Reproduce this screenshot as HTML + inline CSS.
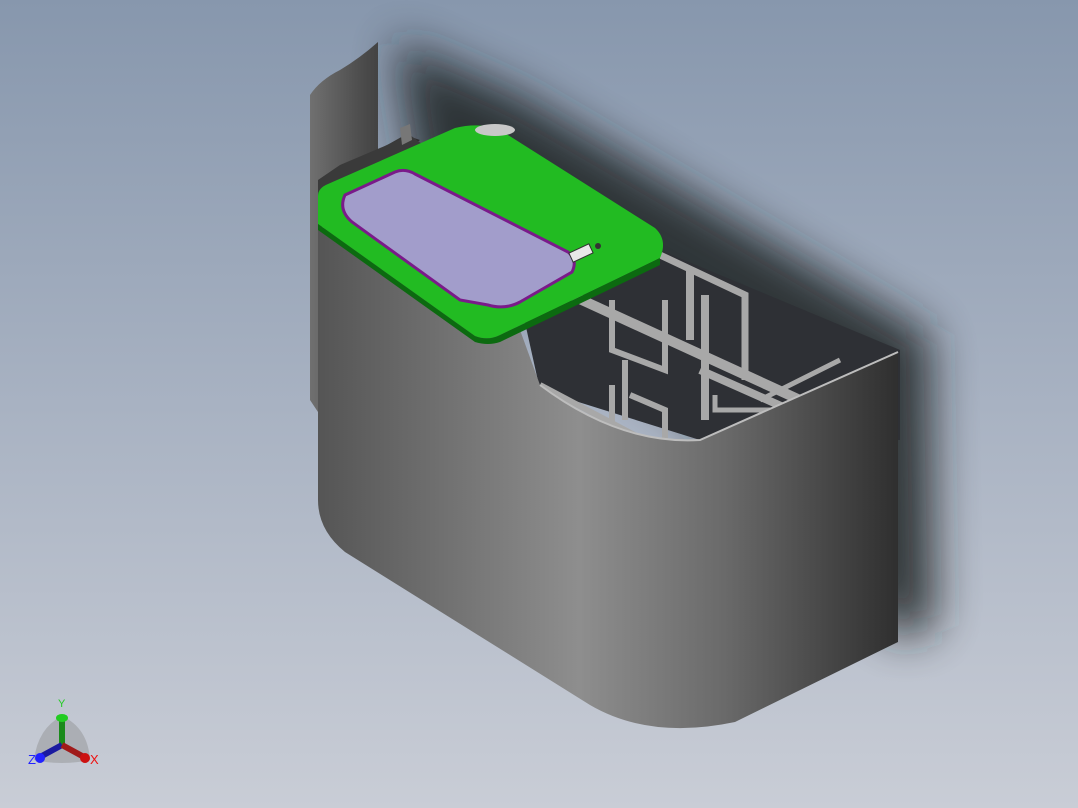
<!DOCTYPE html>
<html><head><style>html,body{margin:0;padding:0;width:1078px;height:808px;overflow:hidden}</style></head><body>
<svg width="1078" height="808" viewBox="0 0 1078 808" xmlns="http://www.w3.org/2000/svg">
<defs>
<linearGradient id="bg" x1="0" y1="0" x2="0" y2="1"><stop offset="0" stop-color="#8797ad"/><stop offset="0.5" stop-color="#a8b2c2"/><stop offset="1" stop-color="#c9cdd6"/></linearGradient>
<linearGradient id="body" x1="0" y1="0" x2="1" y2="0"><stop offset="0" stop-color="#555"/><stop offset="0.45" stop-color="#8e8e8e"/><stop offset="0.7" stop-color="#6a6a6a"/><stop offset="1" stop-color="#2f2f2f"/></linearGradient>
<linearGradient id="lp" x1="0" y1="0" x2="1" y2="0"><stop offset="0" stop-color="#707070"/><stop offset="0.5" stop-color="#4a4a4a"/><stop offset="1" stop-color="#2c2c2c"/></linearGradient>
<filter id="bl"><feGaussianBlur stdDeviation="22"/></filter>
</defs>
<rect width="1078" height="808" fill="url(#bg)"/>
<path d="M395,40 L520,95 L700,200 L930,335 L935,625 L900,640 L700,420 L420,200 Z" fill="#1e2024" opacity="0.85" filter="url(#bl)"/>
<!-- left back panel -->
<path d="M310,95 Q320,80 340,70 Q360,58 378,42 L378,150 L405,135 L420,140 L318,215 L318,412 L310,400 Z" fill="url(#lp)"/>
<path d="M318,230 L318,180 L340,165 L380,148 L410,135 L430,150 Z" fill="#3a3a3a"/>
<!-- interior -->
<path d="M520,300 L660,250 L900,350 L900,440 L700,440 L540,390 Z" fill="#2e3035"/>
<g stroke="#a8a8a8" fill="none">
<path d="M560,290 L800,400" stroke-width="10"/>
<path d="M700,370 L790,410" stroke-width="8"/>
<path d="M660,255 L745,295 L745,380" stroke-width="7"/>
<path d="M690,270 L690,340 M705,295 L705,420" stroke-width="8"/>
<path d="M612,300 L612,350 L665,370 L665,300" stroke-width="6"/>
<path d="M625,360 L625,420 M612,385 L612,425" stroke-width="6"/>
<path d="M630,395 L665,410 L665,438" stroke-width="6"/>
<path d="M715,395 L715,410 L780,410 M760,400 L840,360" stroke-width="5"/>
<path d="M540,385 L640,438" stroke-width="6"/>
</g>
<!-- front body -->
<path d="M318,225 L520,330 L540,385 Q620,445 700,440 L898,352 L898,642 L735,722 Q650,740 590,705 L345,552 Q318,530 318,500 Z" fill="url(#body)"/>
<path d="M540,385 Q620,445 700,440 L898,352" stroke="#bdbdbd" stroke-width="2" fill="none"/>
<!-- green lid -->
<path d="M318,196 Q318,188 328,184 L455,128 Q480,122 500,130 L655,228 Q668,240 660,258 L600,287 L500,335 Q488,341 475,336 L318,224 Z" fill="#22bb22"/>
<path d="M318,224 L475,336 Q488,341 500,335 L600,287 L660,258 L660,265 L600,294 L500,342 Q488,346 475,342 L318,230 Z" fill="#0c6a10"/>
<path d="M345,195 L395,172 Q405,168 415,174 L568,252 Q578,260 572,272 L520,302 Q505,310 488,305 L460,300 L352,222 Q338,210 345,195 Z" fill="#a29dcb" stroke="#7a1a8a" stroke-width="3"/>
<rect x="570" y="248" width="22" height="10" fill="#e8e8e8" stroke="#333" transform="rotate(-25 581 253)"/>
<circle cx="598" cy="246" r="3" fill="#333"/>
<path d="M400,128 L410,124 L412,140 L402,145 Z" fill="#777"/>
<ellipse cx="495" cy="130" rx="20" ry="6" fill="#c8c8c8"/>
<!-- triad -->
<path d="M62,716 Q88,728 90,760 Q62,766 34,760 Q38,728 62,716 Z" fill="#888" opacity="0.4"/>
<line x1="62" y1="745" x2="62" y2="720" stroke="#1a8a1a" stroke-width="6"/>
<ellipse cx="62" cy="718" rx="6" ry="4" fill="#2c2"/>
<line x1="62" y1="745" x2="40" y2="757" stroke="#1a1aa0" stroke-width="6"/>
<circle cx="40" cy="758" r="5" fill="#22f"/>
<line x1="62" y1="745" x2="84" y2="757" stroke="#a01a1a" stroke-width="6"/>
<circle cx="85" cy="758" r="5" fill="#c11"/>
<text x="58" y="707" font-family="Liberation Sans,sans-serif" font-size="11" fill="#2c2">Y</text>
<text x="28" y="764" font-family="Liberation Sans,sans-serif" font-size="13" fill="#22f">Z</text>
<text x="90" y="764" font-family="Liberation Sans,sans-serif" font-size="13" fill="#e11">X</text>
</svg>
</body></html>
